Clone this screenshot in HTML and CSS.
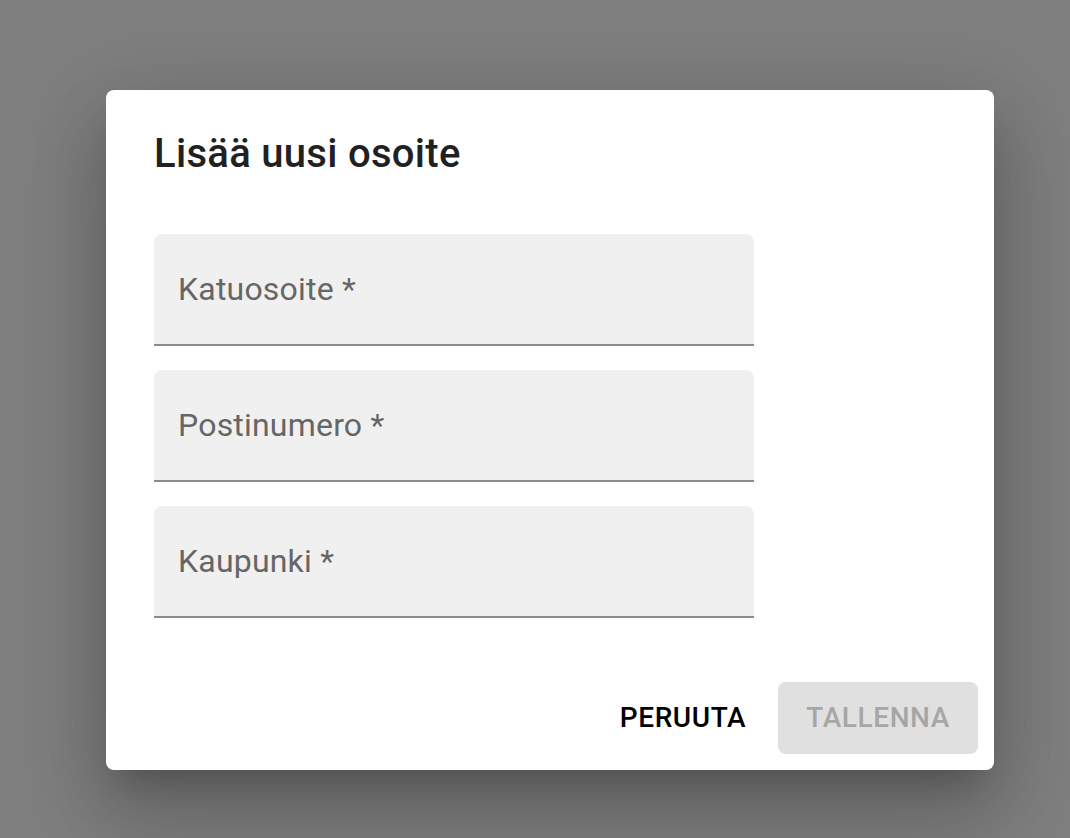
FILE: index.html
```html
<!DOCTYPE html>
<html lang="fi">
<head>
<meta charset="utf-8">
<title>Lisää uusi osoite</title>
<link rel="stylesheet" href="styles.css">
</head>
<body>
<div class="backdrop">
  <div class="dialog" role="dialog">
    <h2 class="dialog-title">Lisää uusi osoite</h2>
    <div class="dialog-content">
      <div class="field"><label class="field-label">Katuosoite *</label></div>
      <div class="field"><label class="field-label">Postinumero *</label></div>
      <div class="field"><label class="field-label">Kaupunki *</label></div>
    </div>
    <div class="dialog-actions">
      <button class="btn btn-text">PERUUTA</button>
      <button class="btn btn-contained" disabled>TALLENNA</button>
    </div>
  </div>
</div>
</body>
</html>
```

FILE: styles.css
```css
html, body {
  margin: 0;
  padding: 0;
  height: 100%;
}
body {
  background: #7f7f7f;
  font-family: Roboto, "Liberation Sans", sans-serif;
  overflow: hidden;
}
.backdrop {
  padding: 90px 0 0 106px;
}
.dialog {
  width: 888px;
  background: #fff;
  border-radius: 8px;
  box-sizing: border-box;
  display: flex;
  flex-direction: column;
  box-shadow: 0 22px 30px -14px rgba(0,0,0,0.2), 0 48px 76px 6px rgba(0,0,0,0.14), 0 18px 92px 16px rgba(0,0,0,0.12);
}
.dialog-title {
  margin: 0;
  padding: 32px 48px;
  font-size: 40px;
  font-weight: 500;
  line-height: 64px;
  letter-spacing: 0.3px;
  color: #212121;
}
.dialog-content {
  padding: 16px 48px 48px;
  display: flex;
  flex-direction: column;
  gap: 24px;
}
.field {
  width: 600px;
  height: 112px;
  box-sizing: border-box;
  background: #f0f0f0;
  border-radius: 8px 8px 0 0;
  border-bottom: 2px solid #8c8c8c;
  padding: 31px 24px 0;
}
.field-label {
  display: block;
  font-size: 32px;
  line-height: 48px;
  color: #666;
  letter-spacing: 0.2px;
}
.dialog-actions {
  padding: 16px;
  display: flex;
  justify-content: flex-end;
  align-items: center;
  gap: 16px;
}
.btn {
  font-family: inherit;
  font-size: 28px;
  font-weight: 500;
  letter-spacing: 0.6px;
  line-height: 48px;
  padding: 12px 16px;
  min-width: 128px;
  border: none;
  border-radius: 8px;
  background: transparent;
  cursor: pointer;
}
.btn-text {
  color: #000;
}
.btn-contained {
  background: #e0e0e0;
  color: #a6a6a6;
  padding: 12px 28px;
}
```
